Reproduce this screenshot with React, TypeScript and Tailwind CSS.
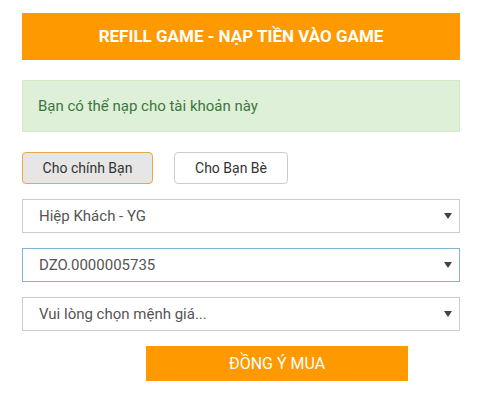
import React from "react";

const font = { fontFamily: "Roboto, 'Noto Sans', sans-serif" };

function Caret() {
  return (
    <svg width="8" height="6" viewBox="0 0 8 6" className="shrink-0">
      <path d="M0 0 L8 0 L4 6 Z" fill="#444" />
    </svg>
  );
}

function SelectBox({ label, focused }: { label: string; focused?: boolean }) {
  return (
    <div
      className={`flex h-[34px] items-center justify-between border bg-white pl-[16px] pr-[7px] text-[15px] text-[#555] ${
        focused ? "border-[#7eb4d6]" : "border-[#ccc]"
      }`}
    >
      <span>{label}</span>
      <Caret />
    </div>
  );
}

export default function App() {
  return (
    <div className="h-[405px] w-[481px] bg-white" style={font}>
      <div className="ml-[22px] w-[438px] pt-[13px]">
        <div className="flex h-[47px] items-center justify-center bg-[#ff9900] text-[17px] font-bold text-white">
          REFILL GAME - NẠP TIỀN VÀO GAME
        </div>

        <div className="mt-[20px] flex h-[52px] items-center border border-[#d6e9c6] bg-[#dff0d8] px-[15px] text-[15px] text-[#3c763d]">
          Bạn có thể nạp cho tài khoản này
        </div>

        <div className="mt-[20px] flex gap-[21px]">
          <button className="h-[32px] w-[131px] rounded-[4px] border border-[#eaa844] bg-[#e6e6e6] text-[14px] text-[#333]">
            Cho chính Bạn
          </button>
          <button className="h-[32px] w-[114px] rounded-[4px] border border-[#ccc] bg-white text-[14px] text-[#333]">
            Cho Bạn Bè
          </button>
        </div>

        <div className="mt-[15px] flex flex-col gap-[15px]">
          <SelectBox label="Hiệp Khách - YG" />
          <SelectBox label="DZO.0000005735" focused />
          <SelectBox label="Vui lòng chọn mệnh giá..." />
        </div>

        <div className="mt-[15px] flex">
          <button className="ml-[124px] h-[35px] w-[262px] bg-[#ff9900] text-[16px] text-white">
            ĐỒNG Ý MUA
          </button>
        </div>
      </div>
    </div>
  );
}
